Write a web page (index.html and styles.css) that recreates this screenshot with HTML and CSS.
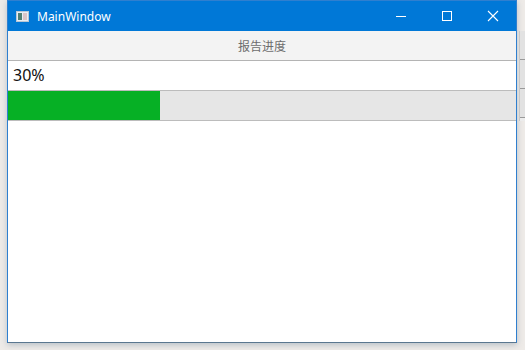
FILE: index.html
```html
<!DOCTYPE html>
<html lang="en">
<head>
  <meta charset="UTF-8">
  <title>MainWindow</title>
  <link rel="stylesheet" href="styles.css">
</head>
<body>
<div class="desktop">
  <div class="window">
    <div class="titlebar">
      <svg class="app-icon" width="13" height="11" viewBox="0 0 13 11">
        <rect x="0.5" y="0.5" width="12" height="10" fill="#e8eef5" stroke="#b9c6d4"/>
        <rect x="2" y="2" width="4" height="7" fill="#4f7f74"/>
        <rect x="7" y="2" width="4" height="7" fill="#d9c4c8"/>
      </svg>
      <span class="title">MainWindow</span>
      <div class="caption-btns">
        <svg class="cap" width="46" height="30" viewBox="0 0 46 30"><path d="M18 15.5h10" stroke="#fff" stroke-width="1"/></svg>
        <svg class="cap" width="46" height="30" viewBox="0 0 46 30"><rect x="18.5" y="10.5" width="9" height="9" fill="none" stroke="#fff" stroke-width="1"/></svg>
        <svg class="cap" width="46" height="30" viewBox="0 0 46 30"><path d="M18 10l10 10M28 10l-10 10" stroke="#fff" stroke-width="1.1"/></svg>
      </div>
    </div>
    <div class="content">
      <button class="btn report-btn">报告进度</button>
      <div class="percent">30%</div>
      <div class="progress-bar"><div class="progress" style="width: 30%"></div></div>
    </div>
  </div>
  <div class="behind">
    <div class="behind-row"></div>
    <div class="behind-row"></div>
    <div class="behind-row"></div>
  </div>
</div>
</body>
</html>
```

FILE: styles.css
```css
body { margin: 0; background: #eeebe8; font-family: "Noto Sans", "Noto Sans CJK SC", sans-serif; }
.desktop { display: flex; height: 350px; padding-left: 7px; }
.window { width: 508px; height: 341px; border: 1px solid #2f7fcf; border-bottom-color: #5a7790; background: white; display: flex; flex-direction: column; box-shadow: 0 2px 6px rgba(120,140,160,0.45); }
.titlebar { height: 30px; background: #0078d7; display: flex; align-items: center; color: white; flex-shrink: 0; }
.app-icon { margin-left: 8px; margin-right: 8px; }
.title { font-size: 12px; }
.caption-btns { margin-left: auto; display: flex; }
.cap { display: block; }
.content { display: flex; flex-direction: column; }
.btn { height: 30px; border: none; border-bottom: 1px solid #b4b4b4; background: #f3f3f3; color: #6d6d6d; font-family: "Noto Sans CJK SC", sans-serif; font-size: 12px; padding: 0; }
.percent { height: 30px; line-height: 28px; padding-left: 5px; font-size: 16px; color: #111; border-bottom: 1px solid #bcbcbc; box-sizing: border-box; }
.progress-bar { height: 30px; background: #e6e6e6; border-bottom: 1px solid #bcbcbc; box-sizing: border-box; }
.progress { height: 100%; background: #06b025; }
.behind { flex: 1; margin-top: 31px; background: #ececec; border-left: 1px solid #c8c8c8; display: flex; flex-direction: column; height: 90px; margin-left: 2px; }
.behind-row { height: 28px; border-bottom: 1px solid #9a9a9a; background: #e2e2e2; }
```
